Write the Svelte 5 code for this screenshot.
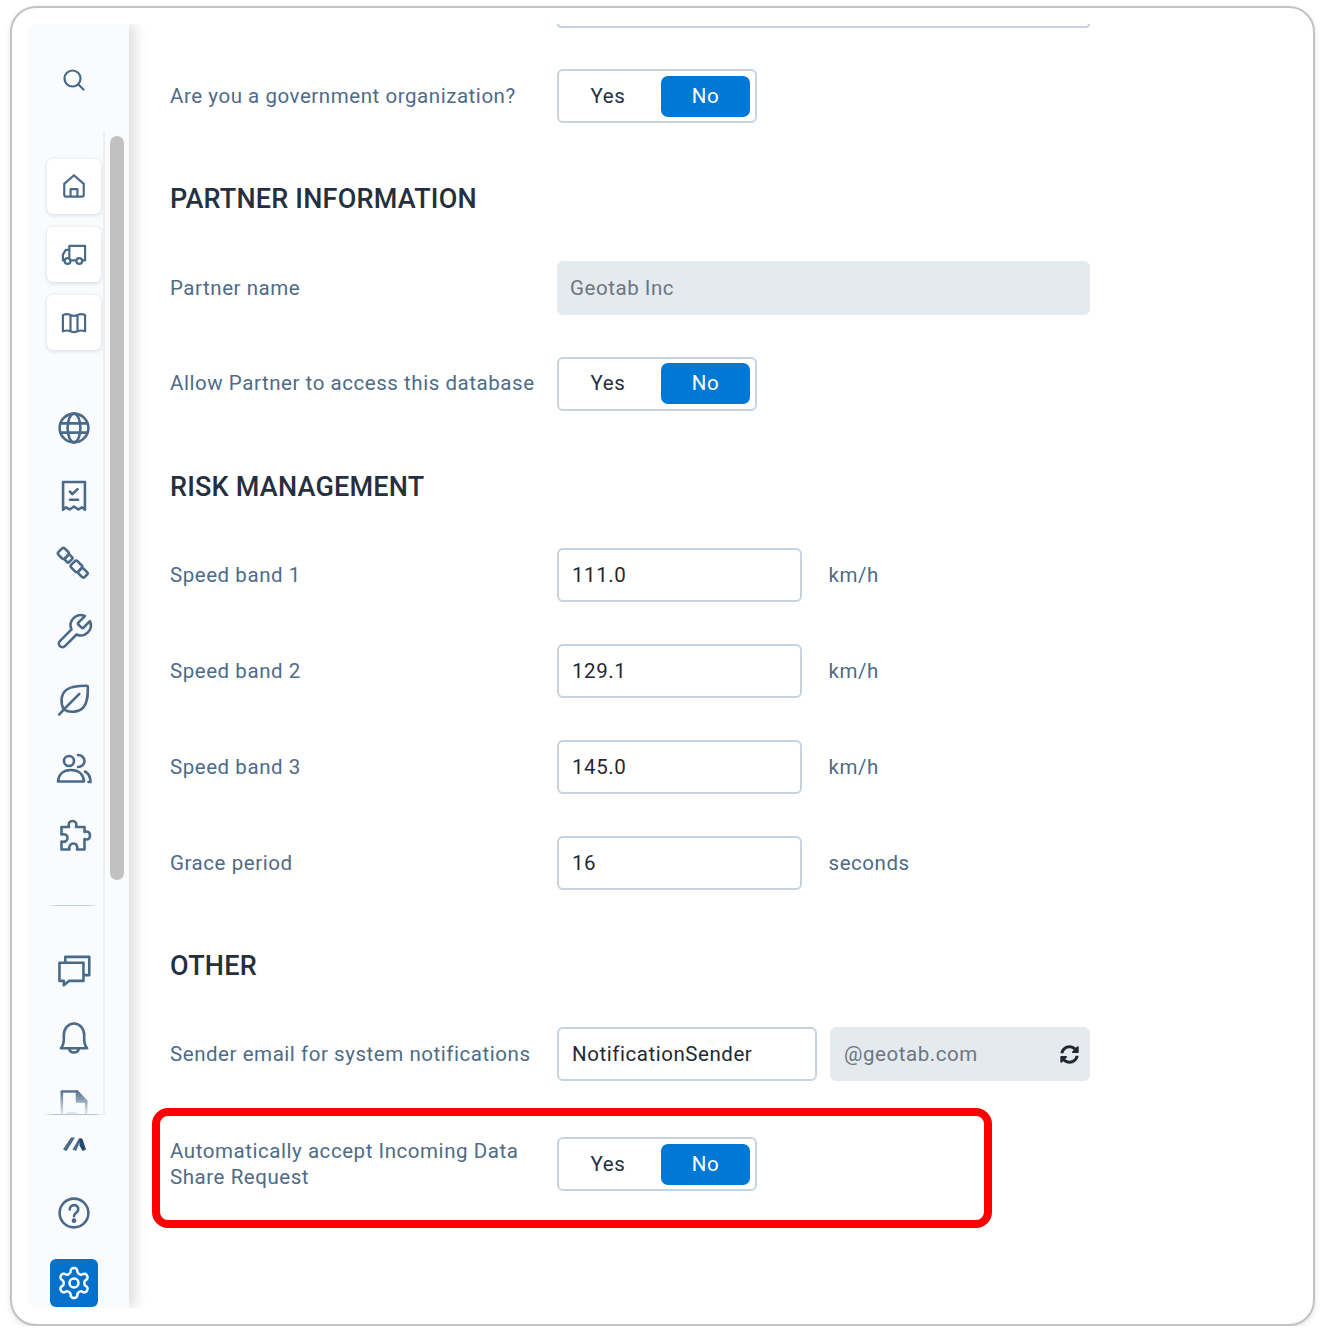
<script>
  const speedRows = [
    { label: 'Speed band 1', value: '111.0', unit: 'km/h' },
    { label: 'Speed band 2', value: '129.1', unit: 'km/h' },
    { label: 'Speed band 3', value: '145.0', unit: 'km/h' },
    { label: 'Grace period', value: '16', unit: 'seconds' }
  ];
  const tiles = ['home', 'truck', 'map'];
  const navTop = ['globe', 'receipt', 'sat', 'wrench', 'leaf', 'users', 'puzzle'];
  const navBottom = ['chat', 'bell', 'doc'];
  const boxes = {
    home: '0.500 0.800 23 23',
    wrench: '2.500 2.500 19 19',
    leaf: '1 1 22.500 22.500',
    users: '0 0 32 32',
    puzzle: '0 0 32 32',
    chat: '1 1 22 22',
    bell: '1 1 22 22',
    doc: '1.500 1.500 21 21',
    sat: '0.500 0.500 23 23'
  };
</script>

{#snippet icon(name)}
  <svg class="ico" viewBox={boxes[name] ?? '0 0 24 24'} aria-hidden="true">
    {#if name === 'home'}
      <path d="M4 19.500V10.500L12 3.500l8 7v9c0 .8-.6 1.500-1.500 1.500h-13c-.9 0-1.500-.7-1.500-1.500zM9.200 21v-6.200h5.600V21" />
    {:else if name === 'truck'}
      <path d="M9 17.500h5M19 17.500h2.500V5H8v3.500H5L2.500 12.500v5h1.500M8 8.500v6" />
      <circle cx="6.500" cy="18" r="2.500" /><circle cx="16.500" cy="18" r="2.500" />
    {:else if name === 'map'}
      <path d="M2.500 6c2.500-1 4.500-1 6.500 0s4 1 6 0 4-1 6.500 0v14c-2.500-1-4.500-1-6.500 0s-4 1-6 0-4-1-6.500 0zM9 6v14M15 6v14" />
    {:else if name === 'globe'}
      <circle cx="12" cy="12" r="10.800" /><ellipse cx="12" cy="12" rx="4.800" ry="10.800" /><path d="M2 8.500h20M2 15.500h20" />
    {:else if name === 'receipt'}
      <path d="M3.800 1.500h16.400v20.800l-2.200-1.800-2.700 1.600-3.300-2.200-3.300 2.200-2.700-1.600-2.200 1.800zM9 8.800l1.800 1.800 3.800-3.800M9 14.800h6" />
    {:else if name === 'sat'}
      <g transform="rotate(45 12 12)"><rect x="-2" y="8.800" width="6.500" height="6.400" rx="1.500" /><rect x="4.500" y="9.500" width="4" height="5" rx="1" /><rect x="11" y="8.800" width="7" height="6.400" rx="1.500" /><rect x="18" y="9.500" width="6" height="5" rx="1.200" /></g>
    {:else if name === 'wrench'}
      <path d="M14.700 6.300a1 1 0 0 0 0 1.400l1.600 1.600a1 1 0 0 0 1.400 0l3.770-3.770a6 6 0 0 1-7.940 7.940l-6.910 6.910a2.120 2.120 0 0 1-3-3l6.910-6.910a6 6 0 0 1 7.940-7.940l-3.760 3.760z" />
    {:else if name === 'leaf'}
      <path d="M1.800 22.500 6 18M5 18.800C2.500 14 3 8 7 5c3.500-2.700 9-2.800 14-2.800.8 0 1 .5 1 1 0 5 0 10.500-3 14-3 3.500-9.500 4.500-14 1.600zM6 18 16 8" />
    {:else if name === 'users'}
      <circle cx="11" cy="9" r="5" /><path d="M0 29.500c.5-7 5-11.500 13-11.500s12.500 4.500 13 11.500zM20 3c3.500 0 6.500 2.500 6.500 6s-3 6-6.500 6M27 19.500c3.500 1.800 5.500 5.500 5.500 10.500h-2" />
    {:else if name === 'puzzle'}
      <path d="M3.500 7H11c-1.500-4 1-6 3.500-6s5 2 3.500 6h8.500v5c4-1.500 5.500 1 5.500 3.500s-1.500 5-5.500 3.500v10.500H19c1-4-1-6-3.500-6s-5 2-4 6H3.500v-8c4 1 6-1 6-3.500s-2-4.500-6-3.500z" />
    {:else if name === 'chat'}
      <path d="M6 7V3h16.500v12.500H18.500M2 7h16.500v12.500H8.500L5 22.500v-3H2z" />
    {:else if name === 'bell'}
      <path d="M3 19c.8-.8 1.800-3 2-5.500V10c0-4.500 3-8 7-8s7 3.500 7 8v3.500c.2 2.500 1.200 4.700 2 5.500zM8.500 19.300c.5 1.700 2 2.700 3.500 2.700s3-1 3.500-2.700" />
    {:else if name === 'doc'}
      <path d="M4 24V2.500h10L20 9v15M8 17h5" /><path class="dot" d="M14 2.500 20 9h-6z" />
    {:else if name === 'help'}
      <circle cx="12" cy="12" r="10.800" /><path d="M8.800 9.300c0-1.900 1.400-3.200 3.200-3.200s3.200 1.200 3.200 3c0 2.700-3.200 2.700-3.200 5.300" /><circle class="dot" cx="12" cy="17.800" r="0.800" />
    {:else if name === 'gear'}
      <circle cx="12" cy="12" r="3" /><path d="M12.220 2h-.44a2 2 0 0 0-2 2v.18a2 2 0 0 1-1 1.730l-.43.250a2 2 0 0 1-2 0l-.15-.08a2 2 0 0 0-2.730.730l-.22.380a2 2 0 0 0 .73 2.730l.15.100a2 2 0 0 1 1 1.720v.510a2 2 0 0 1-1 1.740l-.15.090a2 2 0 0 0-.73 2.730l.22.380a2 2 0 0 0 2.730.730l.15-.08a2 2 0 0 1 2 0l.43.250a2 2 0 0 1 1 1.730V20a2 2 0 0 0 2 2h.44a2 2 0 0 0 2-2v-.18a2 2 0 0 1 1-1.730l.43-.25a2 2 0 0 1 2 0l.15.080a2 2 0 0 0 2.730-.730l.22-.39a2 2 0 0 0-.73-2.730l-.15-.08a2 2 0 0 1-1-1.740v-.5a2 2 0 0 1 1-1.740l.15-.09a2 2 0 0 0 .73-2.730l-.22-.38a2 2 0 0 0-2.730-.73l-.15.08a2 2 0 0 1-2 0l-.43-.25a2 2 0 0 1-1-1.730V4a2 2 0 0 0-2-2z" />
    {:else if name === 'search'}
      <circle cx="10.500" cy="10.500" r="8" /><path d="m16.500 16.500 5 5" />
    {/if}
  </svg>
{/snippet}

{#snippet toggle()}
  <div class="toggle"><span class="opt yes">Yes</span><span class="opt on">No</span></div>
{/snippet}

<div class="frame">
  <div class="inner">
    <aside class="side">
      <div class="search">{@render icon('search')}</div>
      <div class="scroll">
        <nav class="nav">
          <div class="tiles">
            {#each tiles as t}
              <div class="tile">{@render icon(t)}</div>
            {/each}
          </div>
          <div class="group">
            {#each navTop as n}
              <div class="item">{@render icon(n)}</div>
            {/each}
          </div>
          <hr class="rule" />
          <div class="group low">
            {#each navBottom as n}
              <div class="item">{@render icon(n)}</div>
            {/each}
          </div>
          <div class="fade"></div>
        </nav>
        <div class="track"><div class="thumb"></div></div>
      </div>
      <div class="foot">
        <div class="logo">
          <svg viewBox="0 0 24 16" width="24" height="16" aria-hidden="true">
            <path class="lg1" d="M1 13.500 9 1.500h4L4.500 15z" />
            <path class="lg1" d="M10.500 13.500 17 2.500h2.500L14 15z" />
            <path class="lg2" d="M17.500 2l3 1 3.500 10.500-3.500 1.500L17.500 9.500z" />
          </svg>
        </div>
        <div class="item">{@render icon('help')}</div>
        <div class="gearbox">{@render icon('gear')}</div>
      </div>
    </aside>

    <main class="main">
      <div class="cut"></div>
      <div class="row first">
        <span class="lab">Are you a government organization?</span>
        {@render toggle()}
      </div>

      <h2 class="h one">PARTNER INFORMATION</h2>
      <div class="row">
        <span class="lab">Partner name</span>
        <div class="field wide off">Geotab Inc</div>
      </div>
      <div class="row tight">
        <span class="lab">Allow Partner to access this database</span>
        {@render toggle()}
      </div>

      <h2 class="h two">RISK MANAGEMENT</h2>
      <div class="stack">
        {#each speedRows as r}
          <div class="row">
            <span class="lab">{r.label}</span>
            <div class="field mid">{r.value}</div>
            <span class="unit">{r.unit}</span>
          </div>
        {/each}
      </div>

      <h2 class="h three">OTHER</h2>
      <div class="row">
        <span class="lab">Sender email for system notifications</span>
        <div class="field sender">NotificationSender</div>
        <div class="field domain off">
          <span>@geotab.com</span>
          <svg class="sync" viewBox="0 0 512 512" aria-hidden="true"><path d="M370.700 133.300C339.500 104 298.900 88 255.800 88c-77.500.1-144.300 53.200-162.800 126.900-1.300 5.400-6.100 9.100-11.700 9.100H24.100c-7.500 0-13.200-6.800-11.800-14.200C33.900 94.900 134.800 8 256 8c66.400 0 126.800 26.100 171.300 68.700L463 41c15.100-15.100 41-4.400 41 17v134c0 13.300-10.700 24-24 24H346c-21.400 0-32.100-25.900-17-41zM32 296h134c21.400 0 32.100 25.900 17 41l-41.700 41.700c31.200 29.300 71.800 45.300 114.900 45.300 77.400-.1 144.300-53.100 162.800-126.800 1.300-5.400 6.100-9.100 11.700-9.100h57.300c7.500 0 13.200 6.800 11.800 14.200C478.100 417.100 377.200 504 256 504c-66.400 0-126.800-26.100-171.300-68.700L49 471c-15.100 15.100-41 4.400-41-17V320c0-13.300 10.700-24 24-24z" /></svg>
        </div>
      </div>
      <div class="row two-line">
        <span class="lab">Automatically accept Incoming Data<br />Share Request</span>
        {@render toggle()}
        <div class="mark"></div>
      </div>
    </main>
  </div>
</div>

<style>
  :global(body) {
    margin: 0;
    background: #fff;
  }
  .frame {
    box-sizing: border-box;
    width: 1305px;
    height: 1320px;
    margin: 6px 0 0 10px;
    padding: 16px;
    border: 2px solid #c3c3c3;
    border-radius: 26px;
    background: #fff;
    box-shadow: 0 2px 5px rgba(0, 0, 0, 0.12);
    font-family: Roboto, "Liberation Sans", sans-serif;
  }
  .inner {
    display: flex;
    height: 100%;
    overflow: hidden;
    border-radius: 10px 0 0 10px;
  }
  .side {
    flex: none;
    width: 101px;
    display: flex;
    flex-direction: column;
    background: #f9fbfd;
    box-shadow: 6px 0 12px rgba(0, 0, 0, 0.13);
    z-index: 1;
  }
  .search {
    box-sizing: border-box;
    flex: none;
    width: 91px;
    height: 107px;
    padding-top: 5px;
    display: flex;
    align-items: center;
    justify-content: center;
  }
  .search .ico {
    width: 24px;
    height: 24px;
    stroke-width: 2.200px;
  }
  .scroll {
    flex: none;
    height: 984px;
    display: flex;
    overflow: hidden;
  }
  .nav {
    position: relative;
    flex: none;
    box-sizing: border-box;
    width: 77px;
    border-right: 2px solid #eceef0;
    padding: 28px 0 0 18.500px;
    overflow: hidden;
    background: #f9fbfd;
  }
  .track {
    flex: 1;
    padding: 5px 5px 0 5px;
  }
  .thumb {
    height: 744px;
    border-radius: 7px;
    background: #c1c1c1;
  }
  .tiles {
    display: flex;
    flex-direction: column;
    gap: 13.500px;
  }
  .tile {
    box-sizing: border-box;
    width: 54.500px;
    height: 54.500px;
    border-radius: 6px;
    background: #fff;
    box-shadow: 0 1px 4px rgba(60, 80, 100, 0.2);
    display: flex;
    align-items: center;
    justify-content: center;
  }
  .tile .ico {
    width: 28px;
    height: 28px;
    stroke-width: 2.200px;
  }
  .group {
    margin: 62px 0 0 0;
    width: 55px;
    display: flex;
    flex-direction: column;
    gap: 36px;
  }
  .group.low {
    margin-top: 48px;
  }
  .item {
    display: flex;
    align-items: center;
    justify-content: center;
    width: 32px;
    height: 32px;
  }
  .group .item {
    margin-left: 11.500px;
  }
  .rule {
    width: 52px;
    height: 1.500px;
    border: 0;
    margin: 53px 0 0 0;
    background: linear-gradient(90deg, rgba(190, 205, 220, 0), #c0cedc 20%, #c0cedc 80%, rgba(190, 205, 220, 0));
  }
  .fade {
    position: absolute;
    left: 16px;
    right: 0;
    bottom: 0;
    height: 26px;
    background:
      linear-gradient(90deg, rgba(170, 190, 210, 0), #b4c4d4 15%, #b4c4d4 85%, rgba(170, 190, 210, 0)) bottom / 100% 1px no-repeat,
      linear-gradient(rgba(249, 251, 253, 0), rgba(249, 251, 253, 0.9));
  }
  .foot {
    width: 92px;
    display: flex;
    flex-direction: column;
    align-items: center;
  }
  .logo {
    height: 16px;
    display: flex;
    margin-top: 21px;
  }
  .foot .item {
    margin-top: 45px;
  }
  .gearbox {
    box-sizing: border-box;
    width: 48px;
    height: 48px;
    margin-top: 30px;
    padding: 6px;
    border-radius: 6px;
    background: #0072ce;
    display: flex;
  }
  .gearbox .ico {
    stroke: #fff;
    stroke-width: 2.500px;
  }
  .lg1 { fill: #4a6a8a; }
  .lg2 { fill: #24476f; }
  .ico {
    width: 100%;
    height: 100%;
    overflow: visible;
    fill: none;
    stroke: #4a6a8a;
    stroke-width: 2.600px;
    stroke-linejoin: round;
    stroke-linecap: round;
  }
  .ico path,
  .ico circle,
  .ico ellipse,
  .ico rect {
    vector-effect: non-scaling-stroke;
  }
  .dot { fill: #4a6a8a; }

  .main {
    flex: 1;
    padding-left: 41px;
    color: #4f6b87;
    font-size: 20.500px;
    letter-spacing: 0.55px;
  }
  .cut {
    box-sizing: border-box;
    width: 533px;
    height: 4px;
    margin-left: 387px;
    border: 2px solid #c6d3e0;
    border-top: 0;
    border-radius: 0 0 6px 6px;
  }
  .row {
    position: relative;
    display: flex;
    align-items: center;
    height: 54px;
  }
  .row.first { margin-top: 41px; }
  .row.tight { margin-top: 41.500px; }
  .row.two-line { margin-top: 56px; }
  .lab {
    flex: none;
    width: 387px;
    line-height: 26.500px;
  }
  .h {
    margin: 0;
    font-size: 27px;
    font-weight: 500;
    letter-spacing: 0.2px;
    line-height: 32px;
    color: #25303e;
  }
  .h.one { margin: 60px 0 46px; }
  .h.two { margin: 60.500px 0 45px; }
  .h.three { margin: 60px 0 45px; }
  .stack {
    display: flex;
    flex-direction: column;
    gap: 42px;
  }
  .field {
    box-sizing: border-box;
    height: 54px;
    border: 2px solid #c6d3e0;
    border-radius: 6px;
    padding: 0 13px;
    display: flex;
    align-items: center;
    color: #1f2933;
    background: #fff;
  }
  .field.off {
    background: #e5eaef;
    border-color: #e5eaef;
    color: #6d7680;
  }
  .wide {
    width: 533px;
    padding: 0 11px;
  }
  .mid { width: 244.500px; }
  .sender { width: 260px; }
  .field.domain {
    width: 260px;
    margin-left: 13px;
    padding: 0 12px;
    justify-content: space-between;
  }
  .sync {
    width: 19px;
    height: 19px;
    margin-right: -3px;
    fill: #1f2933;
  }
  .unit {
    margin-left: 27px;
  }
  .toggle {
    box-sizing: border-box;
    width: 200px;
    height: 54px;
    border: 2px solid #c6d3e0;
    border-radius: 6px;
    padding: 4.500px 5px;
    display: flex;
    background: #fff;
  }
  .opt {
    flex: 1;
    display: flex;
    align-items: center;
    justify-content: center;
    padding-bottom: 1px;
    color: #25303e;
    border-radius: 7px;
  }
  .opt.yes {
    padding-right: 9px;
  }
  .opt.on {
    flex: none;
    width: 89px;
    color: #fff;
    background: #0078d4;
  }
  .mark {
    position: absolute;
    left: -18px;
    top: -29px;
    width: 840px;
    height: 120px;
    box-sizing: border-box;
    border: 8px solid #ff0000;
    border-radius: 16px;
    pointer-events: none;
  }
</style>
